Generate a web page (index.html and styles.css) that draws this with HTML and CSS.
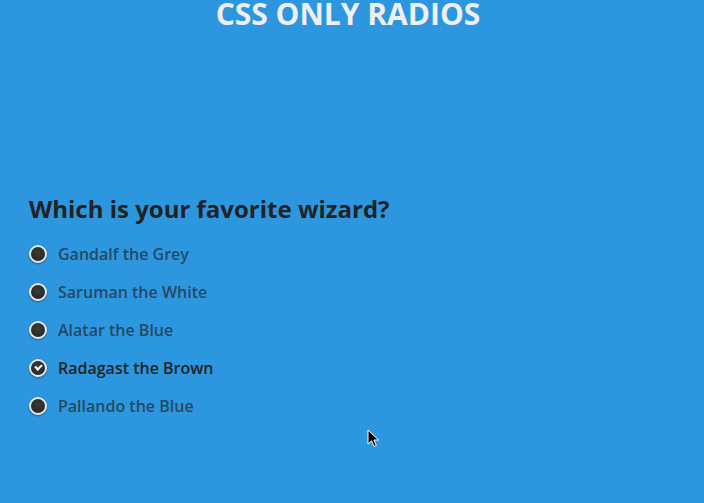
FILE: index.html
```html
<!DOCTYPE html>
<html lang="en">
<head>
<meta charset="utf-8">
<title>CSS Only Radios</title>
<link rel="stylesheet" href="styles.css">
</head>
<body>
<h1 class="title">CSS ONLY RADIOS</h1>
<form class="quiz">
  <h2 class="question">Which is your favorite wizard?</h2>
  <div class="options">
    <label class="option"><input type="radio" name="wizard" class="radio"><span class="label-text">Gandalf the Grey</span></label>
    <label class="option"><input type="radio" name="wizard" class="radio"><span class="label-text">Saruman the White</span></label>
    <label class="option"><input type="radio" name="wizard" class="radio"><span class="label-text">Alatar the Blue</span></label>
    <label class="option"><input type="radio" name="wizard" class="radio" checked><span class="label-text">Radagast the Brown</span></label>
    <label class="option"><input type="radio" name="wizard" class="radio"><span class="label-text">Pallando the Blue</span></label>
  </div>
</form>
<svg class="cursor" width="14" height="20" viewBox="0 0 14 20" aria-hidden="true">
  <path d="M1 1 L1 15 L4.5 11.8 L7 17.5 L9.3 16.5 L6.9 11 L11.5 11 Z" fill="#000" stroke="#fff" stroke-width="1" stroke-linejoin="round"/>
</svg>
</body>
</html>
```
FILE: styles.css
```css
html, body {
  margin: 0;
  padding: 0;
}
body {
  background: #2c96df;
  font-family: "Open Sans", "Liberation Sans", sans-serif;
  width: 704px;
  height: 503px;
  overflow: hidden;
  position: relative;
}
.title {
  margin: 0;
  font-size: 30px;
  line-height: 28px;
  font-weight: 700;
  color: #efefef;
  text-align: center;
  padding-right: 8px;
}
.quiz {
  margin: 165px 0 0 29px;
}
.question {
  margin: 0;
  font-size: 24px;
  line-height: 32px;
  font-weight: 700;
  color: #222;
}
.options {
  margin-top: 19px;
  display: flex;
  flex-direction: column;
  gap: 18px;
}
.option {
  display: flex;
  align-items: center;
  gap: 11px;
  height: 20px;
  font-size: 16px;
  line-height: 20px;
  font-weight: 600;
  color: rgba(34, 34, 34, 0.68);
  cursor: pointer;
}
.radio {
  appearance: none;
  -webkit-appearance: none;
  margin: 0;
  width: 18px;
  height: 18px;
  border-radius: 50%;
  border: 2px solid #e6e6e6;
  box-sizing: border-box;
  background: radial-gradient(circle at 50% 40%, #3c3c3c 0%, #2a2a2a 70%, #1e1e1e 100%);
  box-shadow: 0 1px 2px rgba(0, 0, 0, 0.35);
  position: relative;
  flex: none;
}
.radio:checked::after {
  content: "";
  position: absolute;
  left: 4px;
  top: 3px;
  width: 5px;
  height: 3px;
  border-left: 2px solid #fff;
  border-bottom: 2px solid #fff;
  transform: rotate(-45deg);
}
.radio:checked + .label-text {
  color: #222;
}
.cursor {
  position: absolute;
  left: 367px;
  top: 429px;
}
```
